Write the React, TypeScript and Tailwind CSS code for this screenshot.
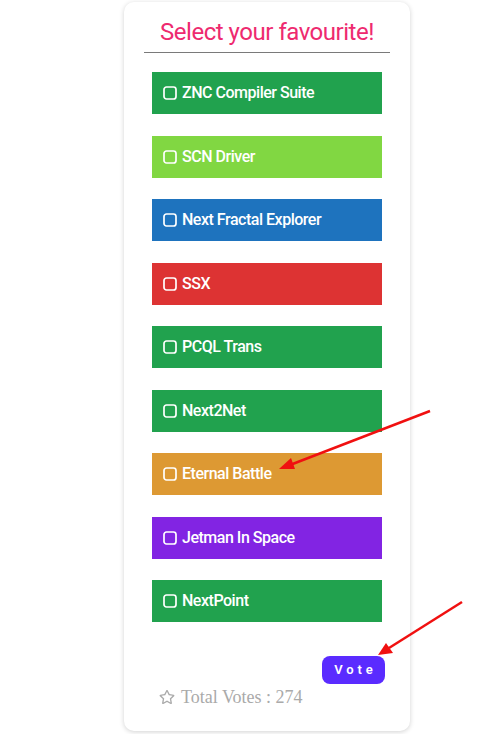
import { FaRegStar } from "react-icons/fa";

const options = [
  { name: "ZNC Compiler Suite", bg: "bg-[#21a24e]" },
  { name: "SCN Driver", bg: "bg-[#81d742]" },
  { name: "Next Fractal Explorer", bg: "bg-[#1e73be]" },
  { name: "SSX", bg: "bg-[#dd3333]" },
  { name: "PCQL Trans", bg: "bg-[#21a24e]" },
  { name: "Next2Net", bg: "bg-[#21a24e]" },
  { name: "Eternal Battle", bg: "bg-[#dd9933]" },
  { name: "Jetman In Space", bg: "bg-[#8224e3]" },
  { name: "NextPoint", bg: "bg-[#21a24e]" },
];

function Box() {
  return (
    <svg width="14" height="14" viewBox="0 0 14 14" fill="none">
      <rect x="1" y="1" width="12" height="12" rx="2.5" stroke="currentColor" strokeWidth="1.7" />
    </svg>
  );
}

export default function App() {
  return (
    <div className="relative min-h-[734px] w-[501px] bg-white font-['Roboto',sans-serif]">
      <div className="ml-[124px] mt-[2px] w-[286px] rounded-[10px] bg-white pb-[22px] pt-[14px] shadow-[0_1px_5px_rgba(0,0,0,0.18)]">
        <div className="mx-[20px] border-b border-[#7a7a7a] pb-[4px]">
          <h2 className="text-center text-[24px] leading-[32px] tracking-[-0.02em] text-[#ee2a6f]">Select your favourite!</h2>
        </div>
        <ul className="mx-[28px] mt-[19px] flex flex-col gap-[21.5px]">
          {options.map((o) => (
            <li key={o.name} className={`${o.bg} flex h-[42px] items-center gap-[5px] pl-[11px] text-[16px] font-medium tracking-[-0.03em] text-white`}>
              <Box />
              <span>{o.name}</span>
            </li>
          ))}
        </ul>
        <div className="mr-[25px] mt-[34px] flex justify-end">
          <button className="h-[28px] w-[63px] rounded-[8px] bg-[#5a2bff] pl-[4px] text-[13px] font-semibold tracking-[0.3em] text-white">
            Vote
          </button>
        </div>
        <div className="ml-[35px] mt-[1px] flex items-center gap-[6px] font-['Liberation_Serif',serif] text-[18px] leading-[24px] text-[#aaaaaa]">
          <FaRegStar className="h-[16px] w-[16px]" />
          <span>Total Votes : 274</span>
        </div>
      </div>
      <svg className="pointer-events-none absolute left-0 top-0" width="501" height="734" viewBox="0 0 501 734">
        <line x1="430" y1="409" x2="290" y2="463" stroke="#f01010" strokeWidth="2.5" />
        <polygon points="279,467 291,456 295,467" fill="#f01010" />
        <line x1="462" y1="600" x2="389" y2="646" stroke="#f01010" strokeWidth="2.5" />
        <polygon points="378,653 386,641 393,651" fill="#f01010" />
      </svg>
    </div>
  );
}
